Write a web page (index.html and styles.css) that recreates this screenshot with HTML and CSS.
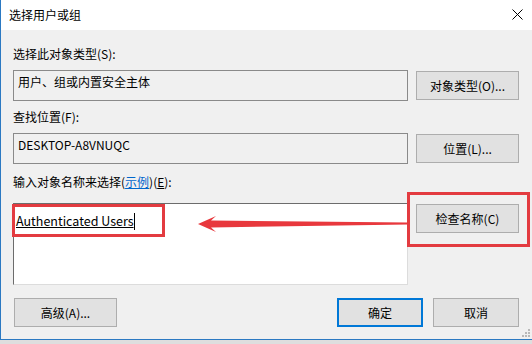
FILE: index.html
```html
<!DOCTYPE html>
<html lang="zh-CN">
<head>
    <meta charset="UTF-8">
    <title>选择用户或组</title>
    <link rel="stylesheet" href="styles.css">
</head>
<body>
    <div class="dialog">
        <div class="titlebar">
            <span class="title">选择用户或组</span>
            <svg class="close" width="11" height="11" viewBox="0 0 11 11">
                <path d="M0.5 0.5 L10.5 10.5 M10.5 0.5 L0.5 10.5" stroke="#000" stroke-width="1" fill="none"/>
            </svg>
        </div>

        <div class="content">
            <div class="label">选择此对象类型(S):</div>
            <div class="row">
                <div class="field">用户、组或内置安全主体</div>
                <button class="btn">对象类型(O)...</button>
            </div>

            <div class="label">查找位置(F):</div>
            <div class="row">
                <div class="field">DESKTOP-A8VNUQC</div>
                <button class="btn">位置(L)...</button>
            </div>

            <div class="label label-names">输入对象名称来选择(<a href="#" class="link">示例</a>)(<u>E</u>):</div>
            <div class="row row-names">
                <div class="names"><span class="name">Authenticated Users</span><span class="caret"></span></div>
                <button class="btn btn-check">检查名称(C)</button>
            </div>

            <div class="footer">
                <button class="btn btn-advanced">高级(A)...</button>
                <div class="spacer"></div>
                <button class="btn btn-small btn-default">确定</button>
                <button class="btn btn-small">取消</button>
            </div>
        </div>

        <!-- annotations drawn over the screenshot -->
        <div class="mark mark-name"></div>
        <div class="mark mark-check"></div>
        <svg class="arrow" width="220" height="20" viewBox="0 0 220 20">
            <polygon points="0,8 18,0 13,4.5 210,6.5 210,8.5 13,11.5 18,16" fill="#e8383d"/>
        </svg>
        <svg class="grip" width="9" height="9" viewBox="0 0 9 9">
            <rect x="7" y="1" width="2" height="2" fill="#b8b8b8"/>
            <rect x="4" y="4" width="2" height="2" fill="#b8b8b8"/>
            <rect x="7" y="4" width="2" height="2" fill="#b8b8b8"/>
            <rect x="1" y="7" width="2" height="2" fill="#b8b8b8"/>
            <rect x="4" y="7" width="2" height="2" fill="#b8b8b8"/>
            <rect x="7" y="7" width="2" height="2" fill="#b8b8b8"/>
        </svg>
    </div>
    <div class="behind"></div>
</body>
</html>
```

FILE: styles.css
```css
body {
    margin: 0;
    width: 532px;
    height: 344px;
    overflow: hidden;
    background-color: #d6d6d6;
    font-family: "Noto Sans CJK SC", "Noto Sans", sans-serif;
    font-size: 12px;
    color: #000;
}

.dialog {
    position: relative;
    box-sizing: border-box;
    width: 532px;
    height: 340px;
    border-left: 1px solid #2b79c2;
    border-bottom: 1px solid #2b79c2;
    background-color: #f0f0f0;
    display: flex;
    flex-direction: column;
}

.titlebar {
    height: 30px;
    flex-shrink: 0;
    background-color: #fff;
    display: flex;
    align-items: center;
    padding: 0 9px 0 8px;
}

.title {
    flex: 1;
    line-height: 16px;
    margin-top: -1px;
}

.close {
    margin-top: -1px;
}

.content {
    padding: 16px 13px 0 12px;
}

.label {
    line-height: 16px;
    height: 16px;
}

.row {
    display: grid;
    grid-template-columns: 395px 103px;
    column-gap: 8px;
    align-items: center;
    margin-top: 8px;
    margin-bottom: 8px;
}

.field {
    box-sizing: border-box;
    height: 31px;
    border: 1px solid #8a8a8a;
    padding: 3px 4px 0;
    line-height: 16px;
}

.btn {
    box-sizing: border-box;
    height: 29px;
    padding: 0;
    font-family: inherit;
    font-size: 12px;
    color: #000;
    background-color: #e1e1e1;
    border: 1px solid #adadad;
}

.label-names {
    margin-top: 10px;
}

.link {
    color: #0066cc;
}

.row-names {
    align-items: start;
    margin-top: 13px;
    margin-bottom: 0;
}

.names {
    box-sizing: border-box;
    height: 82px;
    background-color: #fff;
    border-top: 1px solid #6c6c6c;
    border-left: 1px solid #6c6c6c;
    border-right: 1px solid #dcdcdc;
    border-bottom: 1px solid #dcdcdc;
    padding: 9px 0 0 2px;
    line-height: 16px;
    display: flex;
    align-items: flex-start;
}

.name {
    text-decoration: underline;
    font-size: 12.5px;
}

.caret {
    display: inline-block;
    width: 1px;
    height: 17px;
    background-color: #000;
}

.btn-check {
    margin-top: 1px;
}

.footer {
    display: flex;
    margin-top: 13px;
    column-gap: 10px;
}

.btn-advanced {
    width: 103px;
    margin-left: 1px;
}

.spacer {
    flex: 1;
}

.btn-small {
    width: 86px;
}

.btn-default {
    border: 2px solid #0078d7;
}

.mark {
    position: absolute;
    box-sizing: border-box;
    border: 3px solid #e33b40;
}

.mark-name {
    left: 11px;
    top: 204px;
    width: 153px;
    height: 33px;
}

.mark-check {
    left: 406px;
    top: 192px;
    width: 123px;
    height: 55px;
}

.arrow {
    position: absolute;
    left: 197px;
    top: 216px;
}

.grip {
    position: absolute;
    right: 2px;
    bottom: 2px;
}

.behind {
    height: 4px;
    background-color: #dedede;
}
```
